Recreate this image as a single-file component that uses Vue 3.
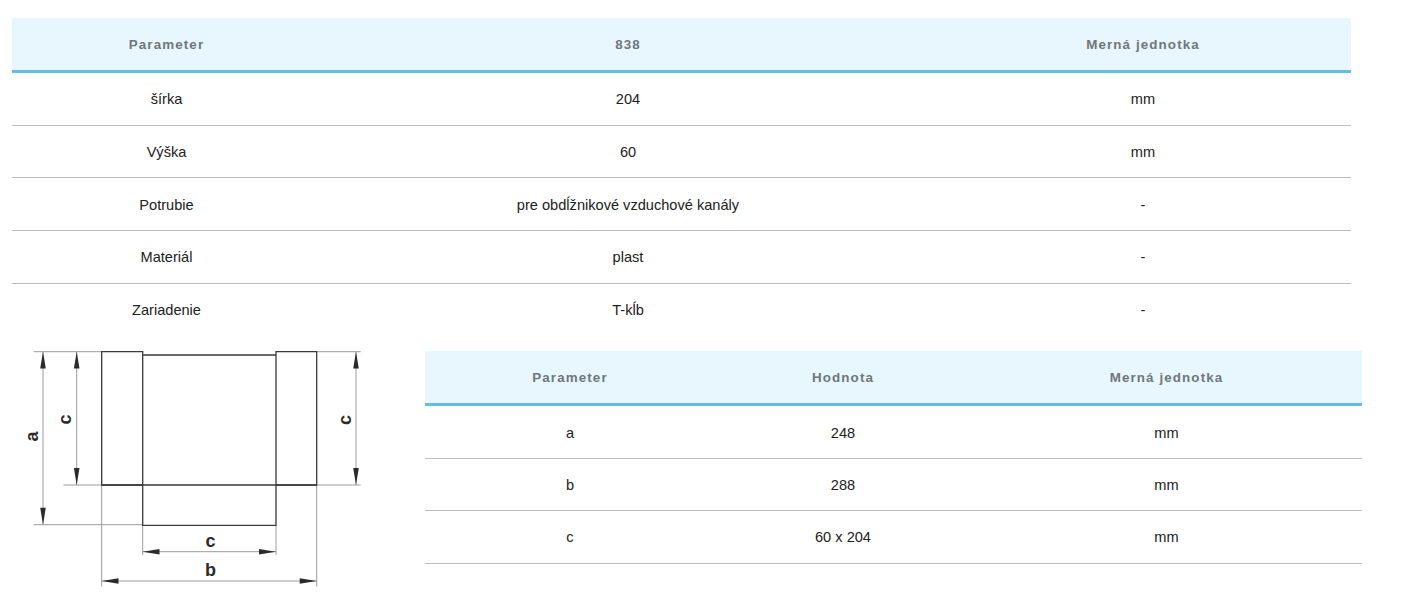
<script setup>
const mainRows = [
  ['šírka', '204', 'mm'],
  ['Výška', '60', 'mm'],
  ['Potrubie', 'pre obdĺžnikové vzduchové kanály', '-'],
  ['Materiál', 'plast', '-'],
  ['Zariadenie', 'T-kĺb', '-'],
]
const dimRows = [
  ['a', '248', 'mm'],
  ['b', '288', 'mm'],
  ['c', '60 x 204', 'mm'],
]
</script>

<template>
  <div class="page">
    <table class="spec main">
      <colgroup>
        <col class="m1" /><col class="m2" /><col class="m3" />
      </colgroup>
      <thead>
        <tr><th>Parameter</th><th>838</th><th>Merná jednotka</th></tr>
      </thead>
      <tbody>
        <tr v-for="row in mainRows" :key="row[0]">
          <td v-for="(cell, i) in row" :key="i">{{ cell }}</td>
        </tr>
      </tbody>
    </table>
    <div class="lower">
      <svg class="diagram" viewBox="12 336 413 260" width="413" height="260">
        <g class="thin">
          <path d="M33.5 351.7H101.7M316.7 351.7H360.7M63.5 485H101.7M316.7 485H360.7M33.5 524.7H142.7" />
          <path d="M101.7 485V586.5M316.7 485V586.5M142.7 525V555M276 525V555" />
          <path d="M43 351.7V524.7M76.7 351.7V485M356 351.7V485M142.7 551.7H276M101.7 581H316.7" />
        </g>
        <g class="thick">
          <path d="M101.7 351.7H142.7V485H101.7ZM276 351.7H316.7V485H276Z" />
          <path d="M142.7 355H276M101.7 485H316.7M142.7 485V525.3H276V485" />
        </g>
        <g class="head">
          <path d="M43 351.7L40.2 368.5H45.8ZM43 524.7L40.2 507.7H45.8Z" />
          <path d="M76.7 351.7L73.9 368.5H79.5ZM76.7 485L73.9 468H79.5Z" />
          <path d="M356 351.7L353.2 368.5H358.8ZM356 485L353.2 468H358.8Z" />
          <path d="M142.7 551.7L159.5 548.9V554.5ZM276 551.7L259 548.9V554.5Z" />
          <path d="M101.7 581L118.5 578.2V583.8ZM316.7 581L299.7 578.2V583.8Z" />
        </g>
        <g class="label">
          <text x="210.5" y="546.5">c</text>
          <text x="210.5" y="576">b</text>
          <text transform="translate(38 436.5) rotate(-90)">a</text>
          <text transform="translate(71 419.5) rotate(-90)">c</text>
          <text transform="translate(350.5 420) rotate(-90)">c</text>
        </g>
      </svg>
      <table class="spec dims">
        <colgroup>
          <col class="d1" /><col class="d2" /><col class="d3" />
        </colgroup>
        <thead>
          <tr><th>Parameter</th><th>Hodnota</th><th>Merná jednotka</th></tr>
        </thead>
        <tbody>
          <tr v-for="row in dimRows" :key="row[0]">
            <td v-for="(cell, i) in row" :key="i">{{ cell }}</td>
          </tr>
        </tbody>
      </table>
    </div>
  </div>
</template>

<style scoped>
.page {
  padding: 18px 0 0 12px;
  font-family: "Liberation Sans", Arial, sans-serif;
  background: #fff;
  height: 593px;
}
.spec {
  border-collapse: separate;
  border-spacing: 0;
  table-layout: fixed;
}
.main { width: 1339px; }
.dims { width: 937px; margin-top: 15px; }
.dims td { height: 52.4px; }
.m1 { width: 309px; }
.m2 { width: 614px; }
.m3 { width: 416px; }
.d1 { width: 290px; }
.d2 { width: 256px; }
.d3 { width: 391px; }
th {
  height: 52px;
  padding: 0;
  background: #e8f6fd;
  border-bottom: 3px solid #62bfe2;
  color: #6f777b;
  font-size: 13.4px;
  font-weight: 700;
  letter-spacing: 1.1px;
  text-align: center;
  box-sizing: content-box;
}
td {
  height: 52.7px;
  padding: 1px 0 0;
  box-sizing: border-box;
  border-bottom: 1px solid #bdbdbd;
  color: #212121;
  font-size: 14.6px;
  text-align: center;
}
.main tbody tr:last-child td { border-bottom-color: transparent; }
.lower {
  display: flex;
  align-items: flex-start;
}
.diagram {
  display: block;
  flex: none;
}
.thin path {
  fill: none;
  stroke: #9c9c9c;
  stroke-width: 1;
}
.thick path {
  fill: none;
  stroke: #3a3a3a;
  stroke-width: 1.3;
}
.head path { fill: #2b2b2b; }
.label text {
  font-family: "Liberation Sans", Arial, sans-serif;
  font-size: 18px;
  font-weight: 700;
  fill: #2b2b2b;
  text-anchor: middle;
}
</style>
